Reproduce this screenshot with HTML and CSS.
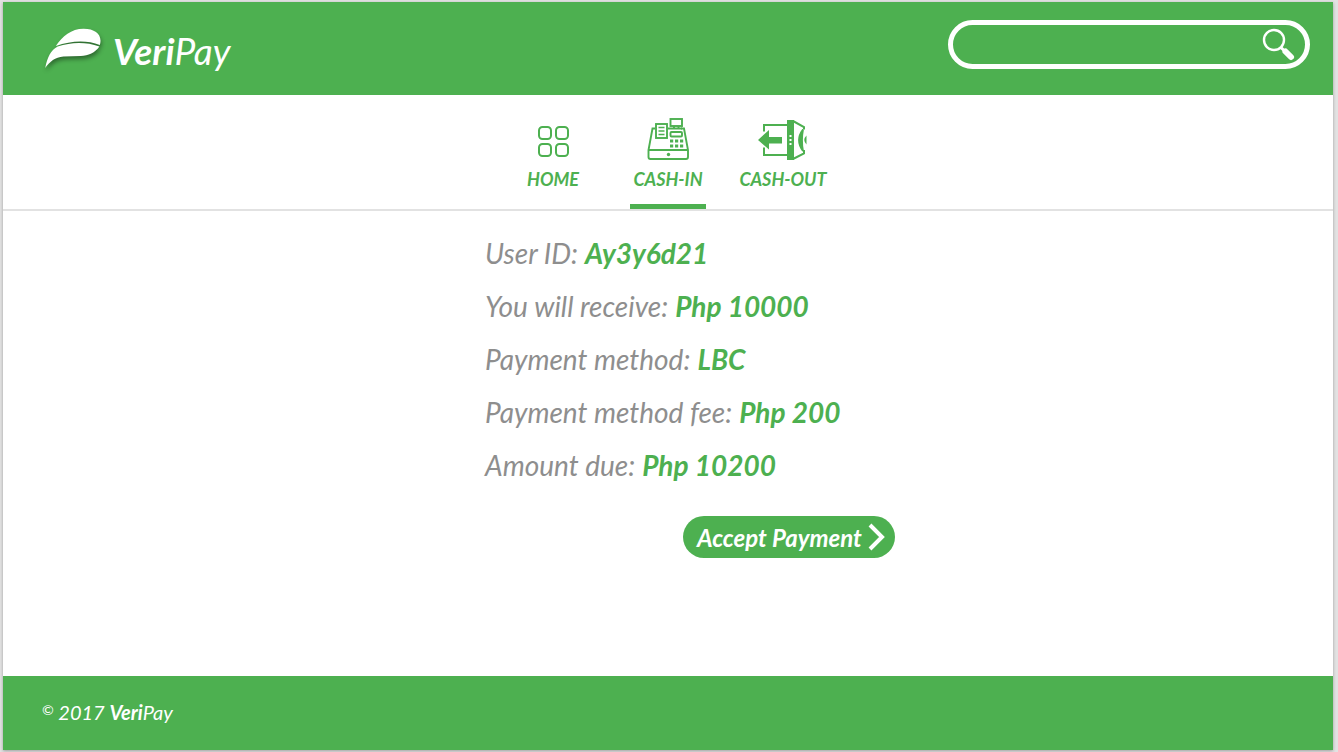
FILE: index.html
```html
<!DOCTYPE html>
<html lang="en">
<head>
<meta charset="utf-8">
<meta name="viewport" content="width=device-width, initial-scale=1">
<title>VeriPay – Cash-In</title>
<link rel="stylesheet" href="styles.css">
</head>
<body>
<div class="page">
  <header class="header">
    <a class="brand" href="#">
      <svg class="brand-leaf" viewBox="0 -7 62 48" aria-hidden="true">
        <path d="M12 18C19 8 28 0 41 0C54 0 61 7 58 17C44 11.500 28 12.500 12 18Z"/>
        <path d="M1 41C3 30 7 22 14 18.500C28 14 43 13.500 57.500 18.500C53 25 46 28 38 28.500L20 29C11 30 6 34 1 41Z"/>
      </svg>
      <span class="brand-name"><b>Veri</b>Pay</span>
    </a>
    <form class="search" role="search">
      <input class="search-input" type="search" aria-label="Search">
      <button class="search-button" type="submit" aria-label="Search">
        <svg class="search-icon" viewBox="0 0 34 34" aria-hidden="true">
          <circle cx="12" cy="12" r="10" fill="none" stroke="currentColor" stroke-width="2.400"/>
          <path d="M18.500 19L22 22.500" stroke="currentColor" stroke-width="3"/>
          <path d="M23.500 23.500L29 29" stroke="currentColor" stroke-width="6" stroke-linecap="round"/>
        </svg>
      </button>
    </form>
  </header>

  <nav class="nav">
    <a class="nav-item" href="#">
      <svg class="nav-icon" viewBox="0 0 50 46" fill="none" stroke="currentColor" stroke-width="2" aria-hidden="true">
        <rect x="11" y="11" width="12" height="12" rx="3.500"/>
        <rect x="28" y="11" width="12" height="12" rx="3.500"/>
        <rect x="11" y="28" width="12" height="12" rx="3.500"/>
        <rect x="28" y="28" width="12" height="12" rx="3.500"/>
      </svg>
      <span>HOME</span>
    </a>
    <a class="nav-item" href="#" aria-current="page">
      <svg class="nav-icon" viewBox="0 0 50 46" fill="none" stroke="currentColor" stroke-width="1.900" aria-hidden="true">
        <path d="M12 12.500H9.500L5.500 34V41Q5.500 43 7.500 43H43Q45 43 45 41V34L41 12.500H38M25 12.500H28M5.500 34H45"/>
        <rect x="13" y="8" width="11" height="14"/>
        <path d="M15.500 11.500H21.500M15.500 15H21.500M15.500 18.500H21.500" stroke-width="1.500"/>
        <rect x="27.500" y="3" width="11.500" height="7"/>
        <path d="M31 10V12.500M35.500 10V12.500M28 12.500H39"/>
        <rect x="27.500" y="16" width="11.500" height="4.500" rx="1"/>
        <path d="M27 25H30.200M32 25H35.200M37 25H40.200M27 30H30.200M32 30H35.200M37 30H40.200" stroke-width="3.200"/>
        <circle cx="25.500" cy="38.500" r="1.700" fill="currentColor" stroke="none"/>
      </svg>
      <span>CASH-IN</span>
    </a>
    <a class="nav-item" href="#">
      <svg class="nav-icon" viewBox="0 0 50 46" fill="none" stroke="currentColor" stroke-width="2" aria-hidden="true">
        <path d="M6 15.500V9H30M6 31.500V39H30"/>
        <path d="M0 24L11 14V21H24V27.500H11V33.500Z" fill="currentColor" stroke="none"/>
        <path d="M29 4H36V44H29Z" fill="currentColor" stroke="none"/>
        <path d="M35 5L46 11V13.500M46 34V37.500L35 43"/>
        <path d="M32.500 19V21M32.500 23V25M32.500 27V29" stroke="#fff"/>
        <path d="M45 13.500Q37 24 45 35Q43 24 45 13.500Z" fill="currentColor" stroke-width="1.800"/>
        <path d="M48.500 19.500Q44 24 48.500 28.500Z" fill="currentColor" stroke="none"/>
      </svg>
      <span>CASH-OUT</span>
    </a>
  </nav>

  <main class="main">
    <section class="payment">
      <dl class="details">
        <div class="row"><dt>User ID:</dt><dd>Ay3y6d21</dd></div>
        <div class="row"><dt>You will receive:</dt><dd>Php 10000</dd></div>
        <div class="row"><dt>Payment method:</dt><dd>LBC</dd></div>
        <div class="row"><dt>Payment method fee:</dt><dd>Php 200</dd></div>
        <div class="row"><dt>Amount due:</dt><dd>Php 10200</dd></div>
      </dl>
      <button class="accept" type="button">
        <span>Accept Payment</span>
        <svg class="chevron" viewBox="0 0 17 28" aria-hidden="true"><path d="M2 2L14 14L2 26" fill="none" stroke="currentColor" stroke-width="4"/></svg>
      </button>
    </section>
  </main>

  <footer class="footer">
    <small class="copyright"><span class="mark">©</span> 2017 <b>Veri</b>Pay</small>
  </footer>
</div>
</body>
</html>
```

FILE: styles.css
```css
:root {
  --green: #4db050;
  --grey: #8e8e8e;
}

* {
  box-sizing: border-box;
}

body {
  margin: 0;
  background: #e2e2e2;
  font-family: Lato, "Open Sans", sans-serif;
  font-style: italic;
}

a {
  color: inherit;
  text-decoration: none;
}

.page {
  display: flex;
  flex-direction: column;
  min-height: calc(100vh - 4px);
  margin: 2px 5px 2px 3px;
  background: #fff;
  box-shadow: 0 1px 3px rgba(0, 0, 0, 0.3);
}

.header {
  display: flex;
  align-items: center;
  justify-content: space-between;
  padding: 18px 23px 26px 41px;
  background: var(--green);
  color: #fff;
}

.brand {
  display: flex;
  align-items: center;
  gap: 9px;
}

.brand-leaf {
  width: 60px;
  height: 46px;
  fill: currentColor;
  filter: drop-shadow(1px 3px 2px rgba(0, 0, 0, 0.4));
}

.brand-name {
  padding-top: 13px;
  font-size: 37px;
  line-height: 36px;
}

.search {
  display: flex;
  align-items: center;
  width: 362px;
  height: 49px;
  padding-right: 9px;
  border: 5px solid #fff;
  border-radius: 25px;
}

.search-input {
  flex: 1;
  min-width: 0;
  height: 100%;
  padding: 0 20px;
  border: 0;
  outline: 0;
  background: transparent;
  color: inherit;
  font: inherit;
  font-size: 20px;
}

.search-button {
  padding: 0;
  border: 0;
  background: none;
  color: inherit;
}

.search-icon {
  display: block;
  width: 34px;
  height: 34px;
}

.nav {
  display: flex;
  justify-content: center;
  gap: 4px;
  padding-top: 21px;
  border-bottom: 2px solid #e2e2e2;
  color: var(--green);
}

.nav-item {
  display: flex;
  flex-direction: column;
  align-items: center;
  width: 111px;
  font-size: 18px;
  font-weight: 700;
  line-height: 34px;
}

.nav-item::after {
  content: "";
  width: 76px;
  height: 5px;
  margin-top: 8px;
}

.nav-item[aria-current]::after {
  background: var(--green);
}

.nav-icon {
  width: 50px;
  height: 46px;
}

.main {
  flex: 1;
  display: flex;
  justify-content: center;
  padding: 16px 0 40px 44px;
}

.payment {
  display: flex;
  flex-direction: column;
  gap: 24px;
  width: 410px;
}

.details {
  margin: 0;
  font-size: 28px;
  line-height: 53px;
  white-space: nowrap;
}

.row {
  display: flex;
  gap: 7px;
}

.row dt {
  color: var(--grey);
}

.row dd {
  margin: 0;
  color: var(--green);
  font-weight: 700;
}

.accept {
  display: flex;
  align-items: center;
  align-self: flex-end;
  justify-content: space-between;
  width: 212px;
  height: 42px;
  padding: 0 10px 0 14px;
  border: 0;
  border-radius: 21px;
  background: var(--green);
  color: #fff;
  font: inherit;
  font-size: 24px;
  font-weight: 700;
  white-space: nowrap;
}

.chevron {
  width: 17px;
  height: 28px;
}

.footer {
  padding: 20px 39px 22px;
  background: var(--green);
  color: #fff;
}

.copyright {
  display: block;
  font-size: 20px;
  line-height: 32px;
}

.mark {
  font-size: 14px;
  line-height: 1;
  vertical-align: 5px;
}
```
